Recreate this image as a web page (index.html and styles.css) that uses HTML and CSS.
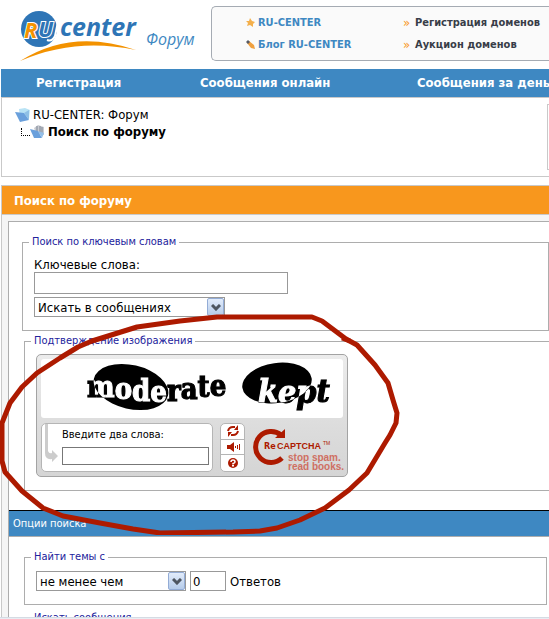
FILE: index.html
```html
<!DOCTYPE html>
<html lang="ru">
<head>
    <meta charset="UTF-8">
    <title>RU-CENTER: Форум - Поиск по форуму</title>
    <link rel="stylesheet" href="styles.css">
</head>
<body>

<div class="page">

    <div class="header">
        <a class="logo" href="#" aria-label="RU-CENTER">
            <svg width="205" height="65" viewBox="0 0 205 65">
                <circle cx="39" cy="29" r="18" fill="#2e75b6"/>
                <path d="M59 17 L55 36 Q52 42 47 40" fill="none" stroke="#fff" stroke-width="2"/>
                <path d="M20 61 Q72 28 136 50 Q75 37 20 61Z" fill="#f39200"/>
                <text class="logo-ru" x="38" y="37" fill="#2e75b6">U</text>
                <text class="logo-ru" x="24" y="38" fill="#f39200">R</text>
                <text class="logo-name" x="60" y="36">center</text>
                <text class="logo-forum" x="146" y="45">Форум</text>
            </svg>
        </a>
        <div class="links">
            <a class="blue" href="#">
                <svg width="10" height="10" viewBox="0 0 10 10"><path d="M4 0 L6 3 L9 4 L7 6 L7 9 L4 7 L1 8 L2 5 L0 3 L3 3Z" fill="#f4b04c"/></svg>
                RU-CENTER
            </a>
            <a href="#"><span class="arrows">»</span>Регистрация доменов</a>
            <a class="blue" href="#">
                <svg width="10" height="10" viewBox="0 0 10 10"><path d="M1 3 L3 1 L8 5 L9 9 L5 8Z" fill="#f0a040"/><path d="M0 2 L2 0 L4 2 L2 4Z" fill="#555a66"/></svg>
                Блог RU-CENTER
            </a>
            <a href="#"><span class="arrows">»</span>Аукцион доменов</a>
        </div>
    </div>

    <div class="nav">
        <a href="#">Регистрация</a>
        <a href="#">Сообщения онлайн</a>
        <a href="#">Сообщения за день</a>
    </div>

    <div class="crumbs">
        <div class="crumbs-list">
            <a href="#">
                <svg width="15" height="14" viewBox="0 0 15 14"><path d="M4 1 L10 0 L15 2 L14 11 L5 9Z" fill="#b9e3f5"/><path d="M0 4 L9 5 L14 12 L5 14Z" fill="#6aa0dc"/><path d="M9 5 L14 2 L14 12Z" fill="#8fc0e6"/></svg>
                RU-CENTER: Форум
            </a>
            <div class="current">
                <span class="branch"></span>
                <svg width="15" height="14" viewBox="0 0 15 14"><path d="M4 3 L8 0 L14 2 L14 10 L6 9Z" fill="#c9ccd2"/><path d="M7 1 V7 M10 1 V8 M12 2 V8" stroke="#7c8594"/><path d="M0 4 L8 6 L12 13 L4 13Z" fill="#6aa0dc"/><path d="M8 6 L14 8 L12 13Z" fill="#94bfe8"/></svg>
                <strong>Поиск по форуму</strong>
            </div>
        </div>
        <div class="crumbs-side"></div>
    </div>

    <form class="search">
        <h1>Поиск по форуму</h1>
        <div class="panel">
            <fieldset class="keywords">
                <legend>Поиск по ключевым словам</legend>
                <label for="query">Ключевые слова:</label>
                <input type="text" id="query">
                <div class="select wide">
                    <select aria-label="Где искать">
                        <option>Искать в сообщениях</option>
                        <option>Искать в заголовках</option>
                    </select>
                    <span class="arrow"><svg width="10" height="7" viewBox="0 0 10 7"><path d="M1 1 L5 5 L9 1" fill="none" stroke="#4d5560" stroke-width="3"/></svg></span>
                </div>
            </fieldset>

            <fieldset class="verify">
                <legend>Подтверждение изображения</legend>
                <div class="captcha">
                    <div class="captcha-image">
                        <svg width="302" height="59" viewBox="0 0 302 59">
                            <ellipse cx="90" cy="28" rx="38" ry="22" transform="rotate(13 90 28)"/>
                            <ellipse cx="236" cy="24" rx="35" ry="20" transform="rotate(-8 236 24)"/>
                            <text class="word" x="46" y="38" dy="0 2 2 1 -1 -2 -2 -1">moderate</text>
                            <text class="word slant" x="217" y="43" dy="0 1 0 -1">kept</text>
                        </svg>
                    </div>
                    <div class="captcha-row">
                        <div class="captcha-answer">
                            <svg width="14" height="40" viewBox="0 0 14 40"><path d="M0 0 H3 V27 Q4 30 7 29 V26 L13 32 L7 38 V35 Q0 36 0 29Z" fill="#ccc"/></svg>
                            <div>
                                <label for="answer">Введите два слова:</label>
                                <input type="text" id="answer">
                            </div>
                        </div>
                        <div class="captcha-buttons">
                            <button type="button" aria-label="Обновить">
                                <svg width="12" height="12" viewBox="0 0 12 12"><path d="M1 6 Q2 2 6 2 L8 2 M11 6 Q10 10 6 10 L4 10" fill="none" stroke="#ad1a00" stroke-width="2"/><path d="M7 5 H11 V0Z M5 7 H1 V12Z" fill="#ad1a00"/></svg>
                            </button>
                            <button type="button" aria-label="Прослушать">
                                <svg width="14" height="12" viewBox="0 0 14 12"><path d="M1 4 H4 L8 1 V11 L4 8 H1Z" fill="#ad1a00"/><path d="M9.5 5 V7 M11.5 4 V8 M13.5 3 V9" stroke="#ad1a00"/></svg>
                            </button>
                            <button type="button" aria-label="Помощь">
                                <svg width="12" height="12" viewBox="0 0 12 12"><circle cx="6" cy="6" r="5" fill="#ad1a00"/><path d="M4 5 Q4 3 6 3 Q8 3 8 5 Q8 6 6 6.500 V7.500" fill="none" stroke="#fff" stroke-width="1.500"/><rect x="5" y="8" width="2" height="1.500" fill="#fff"/></svg>
                            </button>
                        </div>
                        <svg class="captcha-logo" width="92" height="46" viewBox="0 0 92 46">
                            <path d="M29 9 A15.500 15.500 0 1 0 30 32" fill="none" stroke="#ad1a00" stroke-width="5"/>
                            <path d="M33 3 V12 H23Z" fill="#ad1a00"/>
                            <text class="re" x="12" y="23">Re</text>
                            <text class="name" x="25" y="23">CAPTCHA</text>
                            <text class="tm" x="71" y="19">TM</text>
                            <text class="slogan" x="36" y="35">stop spam.</text>
                            <text class="slogan" x="36" y="44">read books.</text>
                        </svg>
                    </div>
                </div>
            </fieldset>

            <h2>Опции поиска</h2>

            <fieldset class="replies">
                <legend>Найти темы с</legend>
                <div class="row">
                    <div class="select">
                        <select aria-label="Условие">
                            <option>не менее чем</option>
                            <option>не более чем</option>
                        </select>
                        <span class="arrow"><svg width="10" height="7" viewBox="0 0 10 7"><path d="M1 1 L5 5 L9 1" fill="none" stroke="#4d5560" stroke-width="3"/></svg></span>
                    </div>
                    <input type="text" id="replies" value="0">
                    <label for="replies">Ответов</label>
                </div>
            </fieldset>

            <fieldset class="dates">
                <legend>Искать сообщения</legend>
            </fieldset>
        </div>
    </form>

    <!-- red marker round the captcha -->
    <svg class="marker" width="400" height="225" viewBox="0 0 400 225">
        <path d="M92 31 L137 17 L180 11 L217 7 H312 L322 11 L346 29 L357 35 L375 55 L388 73 L393 90 L397 103 L396 113 L390 125 L385 133 L367 163 L349 180 L325 198 L300 210 L277 218 L260 221 L233 222 L160 223 L133 219 L100 213 L63 206 L43 198 L22 181 L5 162 L2 151 V113 L10 93 L22 77 L37 63 L60 48 L78 37Z"/>
        <path d="M342 28 L350 31"/>
    </svg>

    <div class="status"></div>
</div>

</body>
</html>
```
FILE: styles.css
```css
* {
    box-sizing: border-box;
}

body {
    margin: 0;
    font-family: "DejaVu Sans Condensed", "DejaVu Sans", sans-serif;
    font-size: 13px;
    line-height: 15px;
    color: #000;
    background: #fff;
}

a {
    color: inherit;
    text-decoration: none;
}

svg {
    display: block;
    flex: none;
}

.page {
    position: relative;
    display: flex;
    flex-direction: column;
    height: 100vh;
    padding-left: 1px;
    overflow: hidden;
}

.header {
    display: flex;
    flex: none;
    height: 69px;
    overflow: hidden;
}

.logo {
    flex: none;
    width: 210px;
    margin-left: -1px;
}

.logo-ru {
    font: italic bold 22px "Open Sans", sans-serif;
    stroke: #fff;
    stroke-width: 2px;
    paint-order: stroke;
}

.logo-name {
    font: italic bold 25px "Open Sans", sans-serif;
    fill: #2e75b6;
}

.logo-forum {
    font: italic 16px "Open Sans", sans-serif;
    fill: #3e88c2;
}

.links {
    display: grid;
    grid-template-columns: 157px auto;
    align-content: center;
    flex: 1;
    row-gap: 7px;
    height: 55px;
    margin: 6px 0 0 1px;
    padding-left: 34px;
    border: 1px solid #a5abb3;
    border-right: none;
    border-radius: 5px 0 0 5px;
    background: #fafafa;
    font-size: 11px;
    font-weight: bold;
    white-space: nowrap;
    color: #383d48;
}

.links a {
    display: flex;
    align-items: center;
    gap: 2px;
}

.links .blue {
    color: #3e88c2;
}

.arrows {
    width: 10px;
    font-size: 13px;
    font-weight: normal;
    color: #f8971d;
}

.nav {
    display: grid;
    grid-template-columns: 164px 217px auto;
    flex: none;
    padding-left: 35px;
    height: 28px;
    line-height: 28px;
    background: #3e88c2;
    color: #fff;
    font-weight: bold;
    white-space: nowrap;
    overflow: hidden;
}

.crumbs {
    display: flex;
    flex: none;
    justify-content: space-between;
    height: 80px;
    border: 1px solid #c9c9c9;
    border-right: none;
}

.crumbs-list {
    padding: 8px 0 0 13px;
}

.crumbs-list a,
.current {
    display: flex;
    align-items: center;
    gap: 3px;
    height: 17px;
}

.branch {
    width: 9px;
    height: 8px;
    margin: 0 -3px 0 6px;
    border: 1px dotted #000;
    border-width: 0 0 1px 1px;
}

.crumbs-side {
    width: 2px;
    height: 66px;
    margin-top: 6px;
    border: 1px solid #c9c9c9;
    border-right: none;
}

.search {
    flex: 1;
    min-height: 0;
    margin-top: 8px;
    border: 1px solid #c9c9c9;
    border-width: 1px 0 0 1px;
    background: #f5f5f5;
    overflow: hidden;
}

h1 {
    margin: 0;
    padding-left: 12px;
    height: 29px;
    border-bottom: 1px solid #c9c9c9;
    background: #f8971d;
    color: #fff;
    font-size: 13px;
    line-height: 29px;
}

.panel {
    margin: 6px 0 0 6px;
    padding-top: 13px;
    border: 1px solid #adadad;
    border-width: 1px 0 0 1px;
    background: #fff;
}

fieldset {
    min-width: 0;
    margin: 0 2px 0 15px;
    padding: 7px 11px 13px;
    border: 1px solid #adadad;
}

legend {
    margin-left: -5px;
    padding: 0 3px;
    color: #22229c;
    font-size: 11px;
    line-height: 14px;
}

.keywords {
    margin: 0 0 0 13px;
    padding-top: 8px;
}

.verify {
    margin-top: 3px;
    margin-right: 0;
    padding-top: 6px;
    border-right: none;
}

.dates {
    margin-top: 6px;
    height: 60px;
}

label {
    display: block;
}

input,
select {
    display: block;
    margin: 0;
    border: 1px solid #999;
    border-radius: 0;
    background: #fff;
    color: #000;
    font: inherit;
}

#query {
    width: 254px;
    height: 22px;
    margin-bottom: 3px;
}

.select {
    position: relative;
    width: 150px;
}

.select.wide {
    width: 191px;
}

select {
    width: 100%;
    height: 20px;
    padding: 0 20px 0 3px;
    appearance: none;
}

.arrow {
    position: absolute;
    top: 1px;
    right: 1px;
    bottom: 1px;
    display: flex;
    align-items: center;
    justify-content: center;
    width: 17px;
    border: 1px solid #93acd6;
    border-radius: 2px;
    background: linear-gradient(#e2ecfb, #b5cbe9);
    pointer-events: none;
}

.captcha {
    width: 312px;
    height: 123px;
    padding: 4px;
    border: 1px solid #a3a3a3;
    border-radius: 5px;
    background: linear-gradient(#ececec, #dcdcdc 60%, #d5d5d5);
}

.captcha-image {
    isolation: isolate;
    height: 59px;
    border-radius: 3px;
    background: #fff;
}

.word {
    font: bold 29px "DejaVu Serif Condensed", "DejaVu Serif", serif;
    fill: #fff;
    stroke: #fff;
    stroke-width: 1px;
    mix-blend-mode: difference;
}

.slant {
    font-size: 32px;
    font-style: italic;
}

.captcha-row {
    display: flex;
    gap: 7px;
    margin-top: 5px;
}

.captcha-answer {
    display: flex;
    flex: none;
    gap: 3px;
    width: 172px;
    height: 49px;
    padding-left: 3px;
    border: 1px solid #b5b5b5;
    border-radius: 5px;
    background: #fff;
    font-size: 11px;
}

.captcha-answer label {
    margin-top: 3px;
}

.captcha-answer input {
    width: 147px;
    height: 18px;
    margin-top: 5px;
    border-color: #777;
}

.captcha-buttons {
    display: grid;
    flex: none;
    grid-template-rows: repeat(3, 1fr);
    width: 25px;
    border: 1px solid #b5b5b5;
    border-radius: 5px;
    background: #fff;
    overflow: hidden;
}

.captcha-buttons button {
    display: flex;
    align-items: center;
    justify-content: center;
    padding: 0;
    border: none;
    border-bottom: 1px solid #b5b5b5;
    background: none;
}

.captcha-buttons button:last-child {
    border-bottom: none;
}

.captcha-logo {
    margin-top: 3px;
}

.re {
    font: bold 9px "DejaVu Sans Condensed", sans-serif;
    fill: #ad1a00;
}

.name {
    font: bold 9px "Liberation Sans", sans-serif;
    fill: #ad1a00;
}

.tm {
    font: 5px "Liberation Sans", sans-serif;
    fill: #ad1a00;
}

.slogan {
    font: bold 10px "Liberation Sans", sans-serif;
    fill: #cf6f62;
}

h2 {
    margin: 19px 0 13px;
    padding-left: 4px;
    border-top: 1px solid #000;
    border-bottom: 1px solid #adadad;
    background: #3e88c2;
    color: #fff;
    font-size: 11px;
    font-weight: normal;
    line-height: 25px;
}

.row {
    display: flex;
    align-items: center;
    gap: 4px;
}

#replies {
    width: 36px;
    height: 20px;
}

.marker {
    position: absolute;
    top: 310px;
    left: 0;
    fill: none;
    stroke: #ad1a00;
    stroke-width: 5px;
    stroke-linejoin: round;
    pointer-events: none;
}

.status {
    flex: none;
    height: 2px;
    margin-left: -1px;
    border-top: 1px solid #d5dbe3;
    background: #e9edf3;
}
```
